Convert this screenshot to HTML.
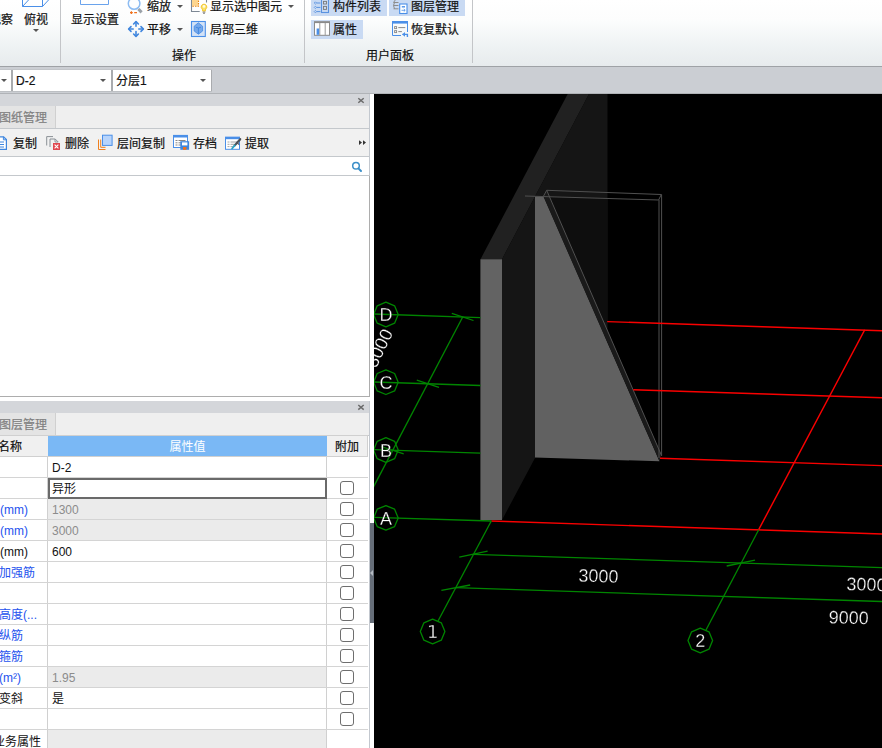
<!DOCTYPE html>
<html lang="zh-CN">
<head>
<meta charset="utf-8">
<title>D-2</title>
<style>
*{box-sizing:border-box;margin:0;padding:0}
html,body{width:882px;height:748px;overflow:hidden;background:#f0f0f0}
body{position:relative;font-family:"Liberation Sans","Noto Sans CJK SC",sans-serif;font-size:12px;color:#111;line-height:1}
.abs{position:absolute}
.t{position:absolute;white-space:nowrap;font-size:12px;line-height:14px;height:14px;-webkit-text-stroke:0.2px}
/* ribbon */
#ribbon{left:0;top:0;width:882px;height:66px;background:linear-gradient(#ffffff 0,#fcfdfd 20px,#eff3f4 45px,#e7ebed 66px)}
.vsep{position:absolute;top:0;width:1px;height:63px;background:#c3c5c8}
.hl{position:absolute;background:#c9daf3}
.dd{position:absolute;width:0;height:0;border-left:3px solid transparent;border-right:3px solid transparent;border-top:3px solid #555}
#band{left:0;top:66px;width:882px;height:28px;background:#cbced3;border-top:1px solid #9fa2a6;border-bottom:1px solid #b0b3b7}
.combo{position:absolute;top:70px;height:21px;background:#fff;border-left:1px solid #a9abae;border-right:1px solid #a9abae;box-shadow:0 1px 0 #bcbfc3,0 -1px 0 #c2c5c9}
/* left panels */
#left{left:0;top:94px;width:370px;height:654px;background:#fff;border-right:1px solid #c3c8cf}
.phead{position:absolute;left:0;width:369px;height:12px;background:#d4d6da}
.tabrow{position:absolute;left:0;width:369px;height:23px;background:#efefef;border-bottom:1px solid #c4c8cc}
.tab{position:absolute;left:0;top:0;width:56px;height:22px;background:#e4e4e4;border-right:1px solid #d0d0d0}
.hline{position:absolute;left:0;height:1px}
/* table */
.row{position:absolute;left:0;width:368px;height:21px;border-bottom:1px solid #d4d4d4;background:#fff}
.row .n{position:absolute;left:0;top:0;width:48px;height:20px;border-right:1px solid #d0d0d0;overflow:hidden}
.row .v{position:absolute;left:48px;top:0;width:279px;height:20px;border-right:1px solid #d0d0d0;padding-left:4px;line-height:22px;overflow:hidden}
.row .v.g{background:#ebebeb;color:#8c8c8c}
.row .n span{position:absolute;left:-1px;top:0;line-height:22px;white-space:nowrap}
.blue{color:#2452ee}
.cb{position:absolute;left:340px;top:3px;width:14px;height:14px;border:1px solid #6e6e6e;border-radius:3px;background:#fff}
/* viewport */
#vp{left:374px;top:94px;width:508px;height:654px;background:#000;overflow:hidden}
</style>
</head>
<body>
<!-- RIBBON -->
<div id="ribbon" class="abs">
  <div class="vsep" style="left:60px"></div>
  <div class="vsep" style="left:304px"></div>
  <div class="vsep" style="left:472px"></div>
  <div class="hl" style="left:311px;top:0;width:76px;height:16px"></div>
  <div class="hl" style="left:389px;top:0;width:76px;height:16px"></div>
  <div class="hl" style="left:311px;top:20px;width:52px;height:19px"></div>
<svg class="abs" style="left:0;top:0" width="882" height="66" viewBox="0 0 882 66" fill="none">
<!-- fushi box -->
<path d="M22.5 -1V6.5H42.5V-1M22.5 6.5L29 -0.5M42.5 6.5L49 -0.5" stroke="#4a8fe8" stroke-width="1"/>
<!-- display settings -->
<path d="M80.5 -1V4.5H108.5V-1" stroke="#6aa3ec" stroke-width="1"/>
<!-- zoom -->
<circle cx="134.1" cy="3.5" r="5.8" stroke="#8dbcf2" stroke-width="1.5" fill="#fdfeff"/>
<path d="M138.4 9L141.6 12.4" stroke="#9aa1a8" stroke-width="3" stroke-linecap="butt"/>
<path d="M130 12.6h2.8M131.4 11.2v2.8M134.2 12.6h2.8" stroke="#f0701a" stroke-width="1.2"/>
<!-- pan -->
<g stroke="#3f86de" stroke-width="1.6" stroke-linecap="round" stroke-linejoin="round">
<path d="M136 22v4.2M136 31.6v4.2M129 29h4.2M138.8 29h4.2"/>
<path d="M133.6 24L136 21.6L138.4 24M133.6 34L136 36.4L138.4 34M131 26.6L128.6 29L131 31.4M141 26.6L143.4 29L141 31.4"/>
</g>
<!-- show selected -->
<path d="M191.5 -1V11.5H199.7M206.5 -1V2.4" stroke="#7d8894" stroke-width="1.1"/>
<rect x="192" y="-1" width="6.2" height="6.8" fill="#fdd58e"/>
<path d="M192.3 6.2h6.2v-7.4" stroke="#e8820c" stroke-width="1.1" stroke-dasharray="1.6 1"/>
<path d="M204 4.2a2.7 2.7 0 0 1 1.9 4.7c-.5.6-.6 1.3-.6 2.2h-2.6c0-.9-.1-1.6-.6-2.2A2.7 2.7 0 0 1 204 4.2Z" fill="#fbe36a" stroke="#f0bf20" stroke-width="0.9"/>
<circle cx="204" cy="6.4" r="1.3" fill="#fffbe0"/>
<path d="M202.6 12.1h2.8M203.1 13.3h1.8" stroke="#7a7a7a" stroke-width="1"/>
<!-- local 3d -->
<rect x="191.5" y="21.5" width="13.8" height="15" fill="#d3e2f6" stroke="#4a8fe8" stroke-width="1.1"/>
<path d="M198.4 22.8L202.6 26.2V31L198.4 34.2L194.2 31V26.2Z" fill="#75a8ea" stroke="#4a8fe8" stroke-width="0.9" stroke-linejoin="round"/>
<path d="M195.8 27.2L198.4 28L201 27.2M198.4 28V33.8" stroke="#3d85e0" stroke-width="0.9"/>
<!-- component list -->
<path d="M316.6 3h3.8M316.6 7.4h3.8M316.6 11.6h3.8" stroke="#5b93e0" stroke-width="1"/>
<path d="M315.4 1.8L316.6 3L315.4 4.2L314.2 3ZM315.4 6.2L316.6 7.4L315.4 8.6L314.2 7.4ZM315.4 10.4L316.6 11.6L315.4 12.8L314.2 11.6Z" stroke="#5b93e0" stroke-width="0.8"/>
<rect x="321.5" y="-1" width="7" height="13.5" stroke="#5b93e0" stroke-width="1.1"/>
<rect x="323.5" y="1.4" width="3" height="2.6" stroke="#7a7a7a" stroke-width="0.9"/>
<rect x="323.5" y="6.4" width="3" height="3" stroke="#7a7a7a" stroke-width="0.9"/>
<!-- properties -->
<rect x="314.5" y="21.8" width="15" height="13.5" fill="#fff" stroke="#8a8a8a" stroke-width="1"/>
<path d="M314 22.3h16" stroke="#8a8a8a" stroke-width="1.6"/>
<path d="M319.8 23v12M325.2 23v12" stroke="#9a9a9a" stroke-width="1"/>
<rect x="316.6" y="28.5" width="2.5" height="6.3" fill="#4a8fe8"/>
<!-- layer mgmt -->
<path d="M396 -1L393.5 2.5h5M393.5 5.5h5M393.5 8.8h5M394.5 2.5L393.5 5.5L394.5 8.8" stroke="#8c8c8c" stroke-width="1"/>
<rect x="399.7" y="4" width="7.3" height="9.5" fill="#fff" stroke="#4a8fe8" stroke-width="1.1"/>
<path d="M401.8 6.8h3.2" stroke="#4a8fe8" stroke-width="1.4"/>
<path d="M401.5 10.3h3.6M403.8 9l1.4 1.3l-1.4 1.3" stroke="#4a8fe8" stroke-width="0.8"/>
<!-- restore default -->
<path d="M392.5 35.5V21.5H407.5V32" stroke="#4a8fe8" stroke-width="1"/>
<path d="M392.5 35.5H401" stroke="#4a8fe8" stroke-width="1"/>
<path d="M392 22.3H408" stroke="#4a8fe8" stroke-width="2.6"/>
<rect x="394.6" y="26.6" width="2" height="2" stroke="#8a8a8a" stroke-width="0.9"/>
<rect x="394.6" y="30.6" width="2" height="2" stroke="#8a8a8a" stroke-width="0.9"/>
<path d="M398.3 27.6h7M398.3 31.6h3.6" stroke="#8a8a8a" stroke-width="1"/>
<path d="M402.4 34.4h5V37" stroke="#4a8fe8" stroke-width="1.4"/>
<path d="M405 32L402.2 34.4L405 36.8Z" fill="#4a8fe8"/>
</svg>
  <div class="t" style="left:-11px;top:13px">观察</div>
  <div class="t" style="left:24px;top:13px">俯视</div>
  <div class="dd" style="left:33px;top:29px"></div>
  <div class="t" style="left:71px;top:13px">显示设置</div>
  <div class="t" style="left:147px;top:0px">缩放</div>
  <div class="dd" style="left:177px;top:5px"></div>
  <div class="t" style="left:210px;top:0px">显示选中图元</div>
  <div class="dd" style="left:287.5px;top:5px"></div>
  <div class="t" style="left:147px;top:23px">平移</div>
  <div class="dd" style="left:177px;top:28px"></div>
  <div class="t" style="left:210px;top:23px">局部三维</div>
  <div class="t" style="left:172px;top:49px">操作</div>
  <div class="t" style="left:333px;top:0px">构件列表</div>
  <div class="t" style="left:411px;top:0px">图层管理</div>
  <div class="t" style="left:333px;top:23px">属性</div>
  <div class="t" style="left:411px;top:23px">恢复默认</div>
  <div class="t" style="left:366px;top:49px">用户面板</div>
</div>
<!-- BAND -->
<div id="band" class="abs"></div>
<div class="combo" style="left:-20px;width:32px"></div>
<div class="dd" style="left:1px;top:79px"></div>
<div class="combo" style="left:12px;width:100px"></div>
<div class="t" style="left:16px;top:74px">D-2</div>
<div class="dd" style="left:100px;top:79px"></div>
<div class="combo" style="left:112px;width:100px"></div>
<div class="t" style="left:116px;top:74px">分层1</div>
<div class="dd" style="left:200px;top:79px"></div>

<!-- LEFT -->
<div id="left" class="abs">
  <div class="phead" style="top:0"></div>
  <div class="tabrow" style="top:12px"><div class="tab"></div><div class="t" style="left:-1px;top:5px;color:#808080">图纸管理</div></div>
  <div class="abs" style="left:0;top:35px;width:369px;height:28px;background:#f1f1f1;border-bottom:1px solid #c4c8cc"></div>
  <div class="t" style="left:13px;top:43px">复制</div>
  <div class="t" style="left:65px;top:43px">删除</div>
  <div class="t" style="left:117px;top:43px">层间复制</div>
  <div class="t" style="left:193px;top:43px">存档</div>
  <div class="t" style="left:245px;top:43px">提取</div>
  <div class="hline" style="top:81px;width:369px;background:#c4c8cc"></div>
  <div class="abs" style="left:-2px;top:82px;width:372px;height:221px;border:1px solid #adadad;border-top:none;background:#fff"></div>
  <div class="abs" style="left:0;top:303px;width:370px;height:4px;background:#fff"></div>
  <div class="phead" style="top:307px"></div>
  <div class="tabrow" style="top:319px;height:23px"><div class="tab"></div><div class="t" style="left:-1px;top:5px;color:#808080">图层管理</div></div>
  <!-- TABLE -->
  <div class="abs" style="left:0;top:341px;width:368px;height:22px;background:#f0f0f0;border-top:1px solid #d0d0d0;border-bottom:1px solid #d0d0d0;border-right:1px solid #d0d0d0">
    <div class="t" style="left:-2px;top:4px">名称</div>
    <div class="abs" style="left:48px;top:0;width:279px;height:20px;background:#7ab8f5;color:#fff;text-align:center;line-height:22px">属性值</div>
    <div class="t" style="left:335px;top:4px">附加</div>
  </div>
  <div class="row" style="top:363px"><div class="n"><span class=""></span></div><div class="v ">D-2</div></div>
  <div class="row" style="top:384px"><div class="n"><span class=""></span></div><div class="v" style="border:2px solid #6a6a6a;left:48px;width:279px;height:21px;top:0;padding-left:2px;line-height:18px;z-index:2">异形</div><div class="cb"></div></div>
  <div class="row" style="top:405px"><div class="n"><span class="blue" style="left:0">(mm)</span></div><div class="v g">1300</div><div class="cb"></div></div>
  <div class="row" style="top:426px"><div class="n"><span class="blue" style="left:0">(mm)</span></div><div class="v g">3000</div><div class="cb"></div></div>
  <div class="row" style="top:447px"><div class="n"><span class="" style="left:0">(mm)</span></div><div class="v ">600</div><div class="cb"></div></div>
  <div class="row" style="top:468px"><div class="n"><span class="blue">加强筋</span></div><div class="v "></div><div class="cb"></div></div>
  <div class="row" style="top:489px"><div class="n"><span class=""></span></div><div class="v "></div><div class="cb"></div></div>
  <div class="row" style="top:510px"><div class="n"><span class="blue">高度(...</span></div><div class="v "></div><div class="cb"></div></div>
  <div class="row" style="top:531px"><div class="n"><span class="blue">纵筋</span></div><div class="v "></div><div class="cb"></div></div>
  <div class="row" style="top:552px"><div class="n"><span class="blue">箍筋</span></div><div class="v "></div><div class="cb"></div></div>
  <div class="row" style="top:573px"><div class="n"><span class="blue">(m²)</span></div><div class="v g">1.95</div><div class="cb"></div></div>
  <div class="row" style="top:594px"><div class="n"><span class="">变斜</span></div><div class="v ">是</div><div class="cb"></div></div>
  <div class="row" style="top:615px"><div class="n"><span class=""></span></div><div class="v "></div><div class="cb"></div></div>
  <div class="row" style="top:636px"><div class="n"><span class="" style="left:-7px;top:1px">业务属性</span></div><div class="v g"></div></div>
</div>

<svg class="abs" style="left:0;top:94px" width="374" height="120" viewBox="0 94 374 120" fill="none">
<!-- close x -->
<path d="M358.3 98.2l5.4 4.6M363.7 98.2l-5.4 4.6" stroke="#6a6a6a" stroke-width="1.5"/>
<!-- copy icon (clipped) -->
<path d="M-4 136.8H3.6L6.4 139.6V149.4H-4" stroke="#3f86de" stroke-width="1.2" fill="#fff"/>
<path d="M3.4 136.8V139.8H6.4" stroke="#3f86de" stroke-width="1"/>
<path d="M-2 142h6M-2 144.5h6M-2 147h6" stroke="#3f86de" stroke-width="1"/>
<!-- delete icon -->
<path d="M46.7 145.5V136.6H53" stroke="#8a9096" stroke-width="1"/>
<path d="M50 147V139H55.2L58.2 142" stroke="#8a9096" stroke-width="1"/>
<path d="M55 139V142H58.2" stroke="#8a9096" stroke-width="0.9"/>
<rect x="53" y="143" width="7" height="7" fill="#e0474f"/>
<path d="M54.6 144.6l3.8 3.8M58.4 144.6l-3.8 3.8" stroke="#fff" stroke-width="1.1"/>
<!-- floor copy -->
<path d="M98.5 139.5V149.5H105.5M100.7 139.5V147.3H105.5" stroke="#f0801e" stroke-width="1"/>
<rect x="102.5" y="135.2" width="9.6" height="10.2" fill="#b8d4fb" stroke="#4a8fe8" stroke-width="1"/>
<!-- archive -->
<rect x="173.5" y="135.5" width="14" height="12" fill="#fff" stroke="#4a8fe8" stroke-width="1"/>
<path d="M173 136.2H188" stroke="#4a8fe8" stroke-width="2.6"/>
<path d="M175.5 140.5h2M178.5 140.5h7M175.5 142.8h2M178.5 142.8h3M175.5 145h2M178.5 145h3" stroke="#858585" stroke-width="1"/>
<rect x="180.3" y="141.2" width="8.8" height="8.6" fill="#3f86de"/>
<rect x="182" y="142.4" width="5.4" height="3" fill="#fff"/>
<rect x="183" y="147" width="3.4" height="2.8" fill="#f0701a"/>
<!-- extract -->
<rect x="225.5" y="137.3" width="14" height="12" fill="#fff" stroke="#4a8fe8" stroke-width="1"/>
<path d="M225 138H240" stroke="#4a8fe8" stroke-width="2.4"/>
<path d="M227.5 142h2M230.5 142h6M227.5 144.3h2M230.5 144.3h5M227.5 146.6h2M230.5 146.6h3" stroke="#9a9a9a" stroke-width="0.9"/>
<path d="M240.2 139.2L234.6 145.6" stroke="#4d5258" stroke-width="2.2" stroke-linecap="round"/>
<path d="M236.2 142l3 2.6" stroke="#4d5258" stroke-width="1.2"/>
<path d="M234.8 145.4L232 148.6" stroke="#2aa6c8" stroke-width="1.6" stroke-linecap="round"/>
<!-- more >> -->
<path d="M359 140.2l3 2.4l-3 2.4ZM363 140.2l3 2.4l-3 2.4Z" fill="#333"/>
<!-- search -->
<circle cx="356" cy="165.8" r="3.3" stroke="#3b8fc8" stroke-width="1.5"/>
<path d="M358.4 168.4L361 171" stroke="#3b8fc8" stroke-width="2" stroke-linecap="round"/>
</svg>
<svg class="abs" style="left:340px;top:400px" width="34" height="14" viewBox="340 400 34 14" fill="none">
<path d="M358.3 405l5.4 4.6M363.7 405l-5.4 4.6" stroke="#6a6a6a" stroke-width="1.5"/>
</svg>
<!-- splitter -->
<div class="abs" style="left:370px;top:94px;width:4px;height:654px;background:#fff"></div>
<div class="abs" style="left:370px;top:523px;width:4px;height:100px;background:#666e79"></div>
<div class="abs" style="left:370px;top:570px;width:0;height:0;border-top:3px solid transparent;border-bottom:3px solid transparent;border-right:3px solid #b4bac2"></div>

<!-- VIEWPORT -->
<div id="vp" class="abs">
<svg class="abs" style="left:0;top:0;will-change:transform" width="508" height="654" viewBox="0 0 508 654" font-family="Liberation Sans, sans-serif">
<polygon points="106.5,165.3 128.0,165.3 215.0,0.0 193.7,0.0" fill="#212121"/>
<polygon points="128.0,165.3 215.0,0.0 233.5,0.0 233.5,236.0 161.0,364.0 128.0,426.0" fill="#151515"/>
<polygon points="169.0,102.3 233.5,104.4 233.5,228.0 224.0,228.0" fill="#0e0e0e"/>
<polygon points="106.4,165.3 128.0,165.3 128.0,426.0 106.4,426.0" fill="#636363"/>
<polygon points="161.0,102.6 169.5,102.6 285.5,367.3 161.0,363.6" fill="#616161"/>
<polygon points="169.5,102.6 172.7,96.3 287.3,361.0 285.5,367.3" fill="#1a1a1a"/>
<line x1="172.7" y1="96.3" x2="287.3" y2="100.5" stroke="#505050" stroke-width="1" />
<line x1="151.0" y1="102.0" x2="284.6" y2="106.0" stroke="#505050" stroke-width="1" />
<line x1="172.7" y1="96.3" x2="169.3" y2="102.5" stroke="#505050" stroke-width="1" />
<line x1="287.3" y1="100.5" x2="284.6" y2="106.0" stroke="#505050" stroke-width="1" />
<line x1="285.0" y1="106.0" x2="285.0" y2="364.0" stroke="#505050" stroke-width="1" />
<line x1="287.6" y1="100.5" x2="287.6" y2="362.0" stroke="#505050" stroke-width="1" />
<line x1="172.7" y1="96.3" x2="287.3" y2="361.0" stroke="#505050" stroke-width="1" />
<line x1="233.2" y1="227.6" x2="508.0" y2="236.8" stroke="#fa0000" stroke-width="1.4" />
<line x1="259.3" y1="295.8" x2="508.0" y2="303.8" stroke="#fa0000" stroke-width="1.4" />
<line x1="286.0" y1="364.2" x2="508.0" y2="371.6" stroke="#fa0000" stroke-width="1.4" />
<line x1="117.3" y1="427.0" x2="508.0" y2="440.0" stroke="#fa0000" stroke-width="1.4" />
<line x1="384.7" y1="435.7" x2="490.7" y2="235.9" stroke="#fa0000" stroke-width="1.4" />
<line x1="0.0" y1="220.0" x2="106.4" y2="223.6" stroke="#008500" stroke-width="1.3" />
<line x1="0.0" y1="288.0" x2="106.4" y2="291.5" stroke="#008500" stroke-width="1.3" />
<line x1="0.0" y1="355.6" x2="106.4" y2="359.2" stroke="#008500" stroke-width="1.3" />
<line x1="0.0" y1="423.3" x2="117.3" y2="427.0" stroke="#008500" stroke-width="1.3" />
<line x1="88.7" y1="223.0" x2="-4.0" y2="399.6" stroke="#008500" stroke-width="1.3" />
<line x1="77.8" y1="219.3" x2="99.5" y2="226.5" stroke="#008500" stroke-width="1.3" />
<line x1="42.8" y1="286.2" x2="65.0" y2="293.4" stroke="#008500" stroke-width="1.3" />
<line x1="7.0" y1="352.5" x2="29.7" y2="359.9" stroke="#008500" stroke-width="1.3" />
<line x1="117.3" y1="427.0" x2="64.0" y2="527.0" stroke="#008500" stroke-width="1.3" />
<line x1="384.7" y1="435.7" x2="332.0" y2="536.0" stroke="#008500" stroke-width="1.3" />
<line x1="99.5" y1="460.4" x2="508.0" y2="473.6" stroke="#008500" stroke-width="1.3" />
<line x1="81.8" y1="493.7" x2="508.0" y2="507.5" stroke="#008500" stroke-width="1.3" />
<line x1="85.3" y1="463.2" x2="113.6" y2="457.2" stroke="#008500" stroke-width="1.3" />
<line x1="67.4" y1="496.4" x2="96.2" y2="491.0" stroke="#008500" stroke-width="1.3" />
<line x1="352.7" y1="472.0" x2="381.0" y2="466.2" stroke="#008500" stroke-width="1.3" />
<polygon points="11.9,232.8 3.2,229.2 -0.4,220.5 3.2,211.8 11.9,208.2 20.6,211.8 24.2,220.5 20.6,229.2" fill="none" stroke="#008500" stroke-width="1.3" stroke-linejoin="round"/>
<polygon points="11.9,300.5 3.2,296.9 -0.4,288.2 3.2,279.5 11.9,275.9 20.6,279.5 24.2,288.2 20.6,296.9" fill="none" stroke="#008500" stroke-width="1.3" stroke-linejoin="round"/>
<polygon points="11.9,368.3 3.2,364.7 -0.4,356.0 3.2,347.3 11.9,343.7 20.6,347.3 24.2,356.0 20.6,364.7" fill="none" stroke="#008500" stroke-width="1.3" stroke-linejoin="round"/>
<polygon points="11.9,436.2 3.2,432.6 -0.4,423.9 3.2,415.2 11.9,411.6 20.6,415.2 24.2,423.9 20.6,432.6" fill="none" stroke="#008500" stroke-width="1.3" stroke-linejoin="round"/>
<polygon points="58.6,549.8 49.9,546.2 46.3,537.5 49.9,528.8 58.6,525.2 67.3,528.8 70.9,537.5 67.3,546.2" fill="none" stroke="#008500" stroke-width="1.3" stroke-linejoin="round"/>
<polygon points="326.3,558.8 317.6,555.2 314.0,546.5 317.6,537.8 326.3,534.2 335.0,537.8 338.6,546.5 335.0,555.2" fill="none" stroke="#008500" stroke-width="1.3" stroke-linejoin="round"/>
<text x="12.0" y="227.3" font-size="18" fill="#fff" stroke="#000" stroke-width="0.3" text-anchor="middle" >D</text>
<text x="12.0" y="295.0" font-size="18" fill="#fff" stroke="#000" stroke-width="0.3" text-anchor="middle" >C</text>
<text x="12.0" y="362.7" font-size="18" fill="#fff" stroke="#000" stroke-width="0.3" text-anchor="middle" >B</text>
<text x="12.0" y="430.5" font-size="18" fill="#fff" stroke="#000" stroke-width="0.3" text-anchor="middle" >A</text>
<text x="58.7" y="544.0" font-size="18" fill="#fff" stroke="#000" stroke-width="0.3" text-anchor="middle" font-family="DejaVu Sans, sans-serif">1</text>
<text x="326.3" y="553.0" font-size="18" fill="#fff" stroke="#000" stroke-width="0.3" text-anchor="middle" >2</text>
<text x="224.6" y="488.2" font-size="18" fill="#fff" stroke="#000" stroke-width="0.3" text-anchor="middle" transform="rotate(1.9 224.6 481.7)">3000</text>
<text x="492.5" y="496.6" font-size="18" fill="#fff" stroke="#000" stroke-width="0.3" text-anchor="middle" transform="rotate(1.9 492.5 490.1)">3000</text>
<text x="474.7" y="529.8" font-size="18" fill="#fff" stroke="#000" stroke-width="0.3" text-anchor="middle" transform="rotate(1.9 474.7 523.3)">9000</text>
<text x="0" y="0" font-size="18" fill="#fff" stroke="#000" stroke-width="0.3" text-anchor="middle" transform="translate(5.0,254.0) rotate(-64.5) translate(0,6.5)">3000</text>
</svg>
</div>
</body>
</html>
